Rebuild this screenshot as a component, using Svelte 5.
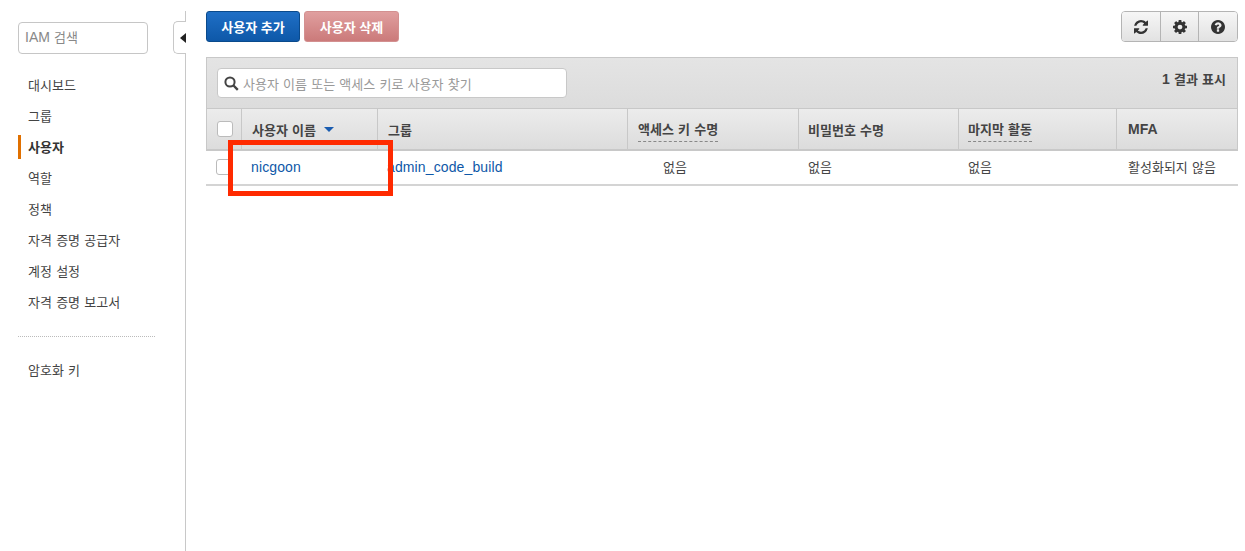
<script>
	const navTop = ['대시보드', '그룹', '사용자', '역할', '정책', '자격 증명 공급자', '계정 설정', '자격 증명 보고서'];
	const columns = [
		{ label: '그룹', cls: 'group' },
		{ label: '액세스 키 수명', cls: 'access', dashed: true },
		{ label: '비밀번호 수명', cls: 'pw' },
		{ label: '마지막 활동', cls: 'last', dashed: true },
		{ label: 'MFA', cls: 'mfa' }
	];
</script>

<div class="page">
	<aside class="sidebar">
		<div class="search-box"><span class="latin">IAM</span> 검색</div>
		<ul class="nav">
			{#each navTop as item}
				<li class:active={item === '사용자'}>{item}</li>
			{/each}
		</ul>
		<div class="nav-sep"></div>
		<ul class="nav">
			<li>암호화 키</li>
		</ul>
		<div class="toggle">
			<svg width="6" height="10" viewBox="0 0 6 10"><path d="M6 0v10L0 5z" fill="#222" /></svg>
		</div>
	</aside>

	<main class="main">
		<div class="toolbar">
			<button class="btn primary">사용자 추가</button>
			<button class="btn danger">사용자 삭제</button>
			<div class="tools">
				<button class="tool" aria-label="새로 고침">
					<svg width="14" height="14" viewBox="128 128 1536 1536">
						<path d="M1639 1056q0 5-1 7-64 268-268 434.500t-478 166.500q-146 0-282.500-55t-243.500-157l-129 129q-19 19-45 19t-45-19-19-45v-448q0-26 19-45t45-19h448q26 0 45 19t19 45-19 45l-137 137q71 66 161 102t187 36q134 0 250-65t186-179q11-17 53-117 8-23 30-23h192q13 0 22.500 9.500t9.500 22.500zm25-800v448q0 26-19 45t-45 19h-448q-26 0-45-19t-19-45 19-45l138-138q-148-137-349-137-134 0-250 65t-186 179q-11 17-53 117-8 23-30 23h-199q-13 0-22.500-9.500t-9.500-22.500v-7q65-268 270-434.500t480-166.500q146 0 284 55.500t245 156.500l130-129q19-19 45-19t45 19 19 45z" fill="#333" />
					</svg>
				</button>
				<button class="tool" aria-label="설정">
					<svg width="14" height="14" viewBox="128 128 1536 1536">
						<path d="M1152 896q0-106-75-181t-181-75-181 75-75 181 75 181 181 75 181-75 75-181zm512-109v222q0 12-8 23t-20 13l-185 28q-19 54-39 91 35 50 107 138 10 12 10 25t-9 23q-27 37-99 108t-94 71q-12 0-26-9l-138-108q-44 23-91 38-16 136-29 186-7 28-36 28h-222q-14 0-24.500-8.500t-11.500-21.500l-28-184q-49-16-90-37l-141 107q-10 9-25 9-14 0-25-11-126-114-165-168-7-10-7-23 0-12 8-23 15-21 51-66.500t54-70.500q-27-50-41-99l-183-27q-13-2-21-12.500t-8-23.500v-222q0-12 8-23t19-13l186-28q14-46 39-92-40-57-107-138-10-12-10-24 0-10 9-23 26-36 98.500-107.500t94.500-71.500q13 0 26 10l138 107q44-23 91-38 16-136 29-186 7-28 36-28h222q14 0 24.500 8.500t11.500 21.500l28 184q49 16 90 37l142-107q9-9 24-9 13 0 25 10 129 119 165 170 7 8 7 22 0 12-8 23-15 21-51 66.500t-54 70.500q26 50 41 98l183 28q13 2 21 12.500t8 23.500z" fill="#333" />
					</svg>
				</button>
				<button class="tool" aria-label="도움말">
					<svg width="14" height="14" viewBox="128 128 1536 1536">
						<path d="M1024 1376v-192q0-14-9-23t-23-9h-192q-14 0-23 9t-9 23v192q0 14 9 23t23 9h192q14 0 23-9t9-23zm256-672q0-88-55.500-163t-138.500-116-170-41q-243 0-371 213-15 24 8 42l132 100q7 6 19 6 16 0 25-12 53-68 86-92 34-24 86-24 48 0 85.500 26t37.500 59q0 38-20 61t-68 45q-63 28-115.500 86.500t-52.500 125.500v36q0 14 9 23t23 9h192q14 0 23-9t9-23q0-19 21.500-49.500t54.500-49.500q32-18 49-28.500t46-35 44.500-48 28-60.500 12.500-81zm384 192q0 209-103 385.500t-279.500 279.500-385.500 103-385.500-103-279.500-279.500-103-385.500 103-385.500 279.500-279.500 385.500-103 385.500 103 279.500 279.500 103 385.500z" fill="#333" />
					</svg>
				</button>
			</div>
		</div>

		<div class="table">
			<div class="filter">
				<div class="filter-input">
					<svg width="15" height="15" viewBox="0 0 15 15">
						<circle cx="6" cy="6" r="4.600" fill="none" stroke="#444" stroke-width="2" />
						<path d="M9.500 9.500l4.300 4.300" stroke="#444" stroke-width="2.400" />
					</svg>
					<span>사용자 이름 또는 액세스 키로 사용자 찾기</span>
				</div>
				<div class="count"><span class="latin">1</span> 결과 표시</div>
			</div>
			<div class="row head">
				<div class="cell check"><span class="checkbox"></span></div>
				<div class="cell name">
					사용자 이름
					<svg width="10" height="5" viewBox="0 0 10 5"><path d="M0 0h10L5 5z" fill="#1a5cb0" /></svg>
				</div>
				{#each columns as col}
					<div class="cell {col.cls}"><span class:dashed={col.dashed} class:latin={col.cls === 'mfa'}>{col.label}</span></div>
				{/each}
			</div>
			<div class="row body">
				<div class="cell check"><span class="checkbox"></span></div>
				<div class="cell name"><span class="link">nicgoon</span></div>
				<div class="cell group"><span class="link">admin_code_build</span></div>
				<div class="cell access center text">없음</div>
				<div class="cell pw text">없음</div>
				<div class="cell last text">없음</div>
				<div class="cell mfa text">활성화되지 않음</div>
			</div>
		</div>
		<div class="highlight"></div>
	</main>
</div>

<style>
	:global(body) {
		margin: 0;
		background: #fff;
	}
	.page {
		display: flex;
		height: 551px;
		overflow: hidden;
		font-family: 'Liberation Sans', 'Noto Sans CJK KR', sans-serif;
		font-size: 13px;
		word-spacing: 0.6px;
		color: #444;
	}
	.latin {
		font-size: 14px;
	}
	.sidebar {
		position: relative;
		width: 185px;
		margin-top: 11px;
		border-right: 1px solid #c8c8c8;
		flex: none;
	}
	.search-box {
		box-sizing: border-box;
		margin: 11px 0 0 18px;
		width: 130px;
		height: 32px;
		padding-left: 6px;
		line-height: 29px;
		border: 1px solid #c6c6c6;
		border-radius: 4px;
		color: #888;
	}
	.nav {
		list-style: none;
		margin: 0;
		padding: 0;
	}
	.search-box + .nav {
		margin-top: 16px;
	}
	.nav li {
		height: 31px;
		line-height: 31px;
		padding-left: 28px;
	}
	.nav li.active {
		font-weight: 700;
		color: #333;
		position: relative;
	}
	.nav li.active::before {
		content: '';
		position: absolute;
		left: 18px;
		top: 3px;
		width: 3px;
		height: 24px;
		background: #e07000;
	}
	.nav-sep {
		margin: 18px 30px 18px 18px;
		border-top: 1px dotted #bbb;
	}
	.toggle {
		position: absolute;
		box-sizing: border-box;
		right: -1px;
		top: 10px;
		width: 13px;
		height: 33px;
		display: flex;
		align-items: center;
		justify-content: flex-end;
		background: #fff;
		border: 1px solid #c8c8c8;
		border-right: none;
		border-radius: 5px 0 0 5px;
	}
	.main {
		position: relative;
		flex: 1;
		padding: 11px 7px 0 20px;
		min-width: 0;
	}
	.toolbar {
		display: flex;
		gap: 4px;
		height: 31px;
	}
	.btn {
		font: inherit;
		font-weight: 700;
		height: 31px;
		padding: 0;
		border-radius: 3px;
		color: #fff;
	}
	.primary {
		width: 94px;
		background: linear-gradient(#1f6fc6, #0e58a8);
		border: 1px solid #0a4a8c;
	}
	.danger {
		width: 95px;
		background: linear-gradient(#e09f9f, #cb7a7a);
		border: 1px solid #d39090;
	}
	.tools {
		margin-left: auto;
		display: flex;
		width: 117px;
		border: 1px solid #b4b4b4;
		border-radius: 4px;
		overflow: hidden;
		box-sizing: border-box;
	}
	.tool {
		flex: 1;
		height: 100%;
		padding: 0;
		border: none;
		border-left: 1px solid #b4b4b4;
		background: linear-gradient(#f6f6f6, #e2e2e2);
		display: flex;
		align-items: center;
		justify-content: center;
	}
	.tool:first-child {
		border-left: none;
	}
	.table {
		margin-top: 15px;
	}
	.filter {
		box-sizing: border-box;
		height: 52px;
		display: flex;
		justify-content: space-between;
		padding: 10px 11px 0 10px;
		background: linear-gradient(#e4e4e4, #dcdcdc);
		border: 1px solid #c8c8c8;
	}
	.filter-input {
		box-sizing: border-box;
		width: 350px;
		height: 30px;
		display: flex;
		align-items: center;
		gap: 4px;
		padding-left: 6px;
		background: #fff;
		border: 1px solid #c8c8c8;
		border-radius: 4px;
		color: #999;
	}
	.count {
		font-weight: 700;
		color: #444;
		line-height: 22px;
	}
	.row {
		display: flex;
		box-sizing: border-box;
	}
	.head {
		height: 42px;
		background: linear-gradient(#ececec, #dcdcdc);
		border-bottom: 2px solid #c8c8c8;
		box-shadow: inset 1px 0 #c8c8c8, inset -1px 0 #c8c8c8;
		font-weight: 700;
		color: #444;
	}
	.body {
		height: 35px;
		padding-bottom: 1px;
		border-bottom: 2px solid #d4d4d4;
	}
	.cell {
		box-sizing: border-box;
		display: flex;
		align-items: center;
		padding-left: 10px;
		flex: none;
	}
	.cell.text {
		padding-bottom: 2px;
	}
	.head .cell + .cell {
		border-left: 1px solid #c8c8c8;
	}
	.head .pw,
	.head .last {
		padding-left: 9px;
	}
	.head .check {
		padding-left: 11px;
	}
	.check {
		width: 35px;
	}
	.name {
		width: 136px;
		gap: 8px;
	}
	.group {
		width: 250px;
	}
	.access {
		width: 171px;
	}
	.access.center {
		padding-left: 36px;
	}
	.pw {
		width: 160px;
	}
	.last {
		width: 158px;
	}
	.mfa {
		flex: 1;
		padding-left: 12px;
	}
	.head .mfa {
		padding-left: 11px;
	}
	.dashed {
		padding-bottom: 3px;
		border-bottom: 1px dashed #888;
		margin-top: 3px;
	}
	.checkbox {
		box-sizing: border-box;
		display: block;
		width: 16px;
		height: 16px;
		background: #fff;
		border: 1px solid #bbb;
		border-radius: 3px;
	}
	.link {
		font-size: 14px;
		letter-spacing: 0.12px;
		color: #0e58a8;
	}
	.highlight {
		position: absolute;
		box-sizing: border-box;
		left: 42px;
		top: 140px;
		width: 165px;
		height: 56px;
		border: 5px solid #ff2a00;
	}
</style>
